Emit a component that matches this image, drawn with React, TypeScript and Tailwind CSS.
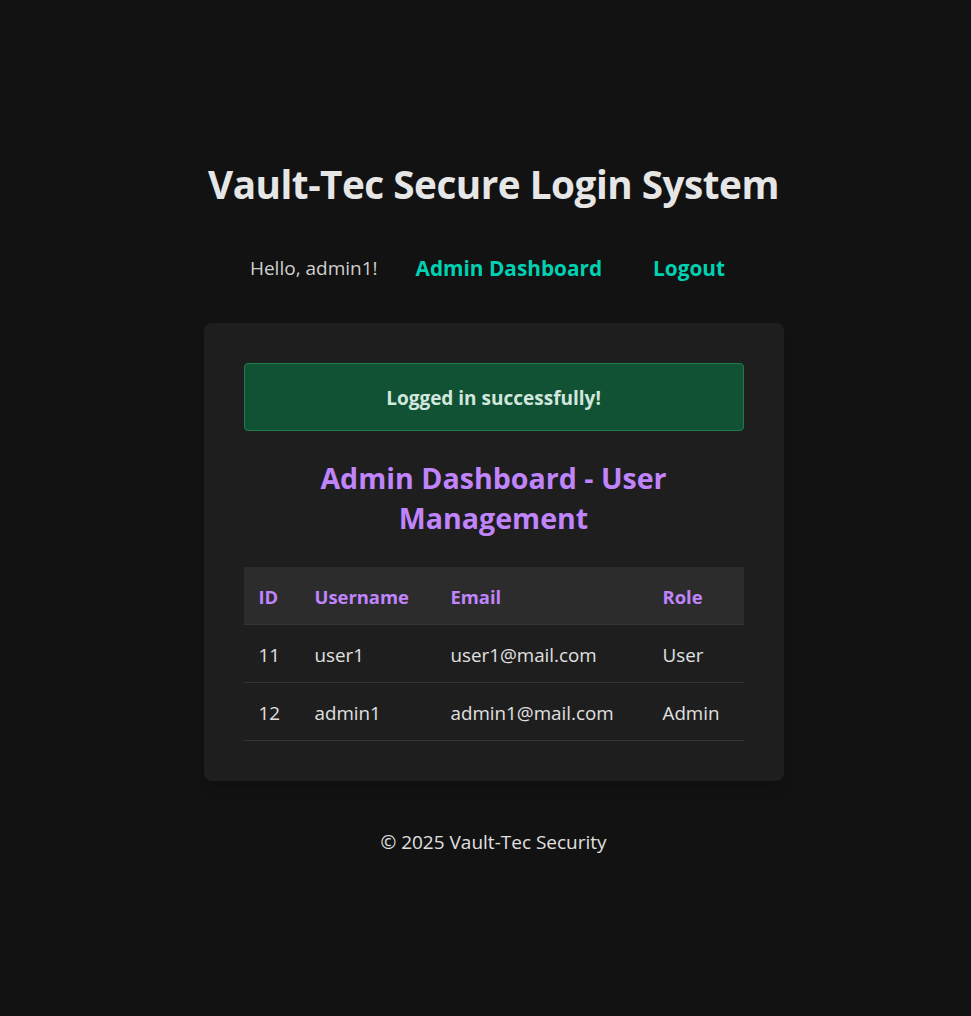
const users = [
  { id: 11, username: "user1", email: "user1@mail.com", role: "User" },
  { id: 12, username: "admin1", email: "admin1@mail.com", role: "Admin" },
];

export default function App() {
  return (
    <div className="min-h-screen bg-[#121212] text-[#e0e0e0] font-['Open_Sans',sans-serif] flex flex-col items-center pt-[161px] pl-[16px]">
      <h1 className="text-[38.7px] leading-[46px] font-bold text-[#e6e6e6] tracking-[-0.5px]">
        Vault-Tec Secure Login System
      </h1>

      <nav className="mt-[47px] mr-[12px] flex items-center leading-[28px]">
        <span className="text-[19px] text-[#cfcfcf]">Hello, admin1!</span>
        <a href="#" className="ml-[38px] text-[20.8px] font-bold text-[#00d1b2]">
          Admin Dashboard
        </a>
        <a href="#" className="ml-[51px] text-[20.8px] font-bold text-[#00d1b2]">
          Logout
        </a>
      </nav>

      <div className="mt-[41px] w-[580px] rounded-lg bg-[#1e1e1e] p-10 shadow-lg">
        <div className="rounded border border-[#1f7a4c] bg-[#115235] pt-[21px] pb-[19px] text-center text-[19px] leading-[26px] font-bold text-[#d1e7dd]">
          Logged in successfully!
        </div>

        <h2 className="mt-[27px] text-center text-[28.6px] leading-[40px] font-bold text-[#c084fc] px-12">
          Admin Dashboard - User Management
        </h2>

        <table className="mt-[29px] w-full border-collapse text-left text-[18.8px] leading-[25px]">
          <thead>
            <tr className="bg-[#2c2c2c] border-b border-[#333]">
              <th className="w-[56px] px-[15px] pt-[17px] pb-[15px] font-bold text-[18.4px] text-[#c084fc]">ID</th>
              <th className="w-[136px] px-[15px] pt-[17px] pb-[15px] font-bold text-[18.4px] text-[#c084fc]">Username</th>
              <th className="w-[212px] px-[15px] pt-[17px] pb-[15px] font-bold text-[18.4px] text-[#c084fc]">Email</th>
              <th className="px-[15px] pt-[17px] pb-[15px] font-bold text-[18.4px] text-[#c084fc]">Role</th>
            </tr>
          </thead>
          <tbody>
            {users.map((u) => (
              <tr key={u.id} className="border-b border-[#333]">
                <td className="px-[15px] pt-[18px] pb-[14px]">{u.id}</td>
                <td className="px-[15px] pt-[18px] pb-[14px]">{u.username}</td>
                <td className="px-[15px] pt-[18px] pb-[14px]">{u.email}</td>
                <td className="px-[15px] pt-[18px] pb-[14px]">{u.role}</td>
              </tr>
            ))}
          </tbody>
        </table>
      </div>

      <footer className="mt-[48px] text-[19px] leading-[26px] text-[#e0e0e0]">
        © 2025 Vault-Tec Security
      </footer>
    </div>
  );
}
